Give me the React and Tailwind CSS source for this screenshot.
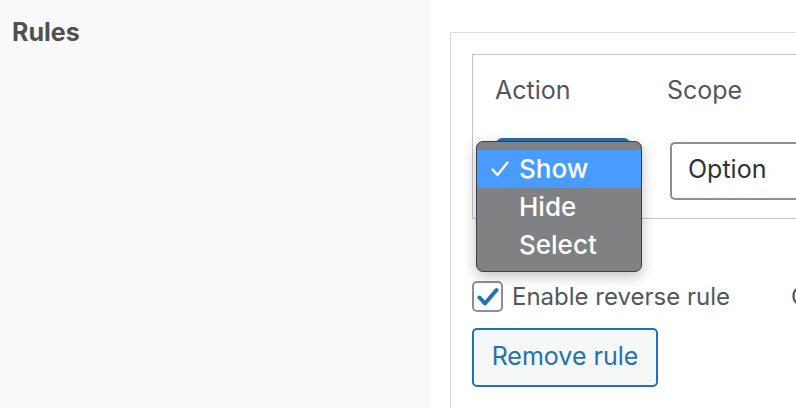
import React from 'react';

const font = { fontFamily: 'Inter, "Liberation Sans", sans-serif' };

const ActionMenu = () => {
    const items = ['Show', 'Hide', 'Select'];
    return (
        <div className="absolute left-[476px] top-[141px] w-[166px] rounded-[7px] border border-[#3f4042] bg-[#7f8183] pt-[8px] pb-[7px] shadow-[0_4px_14px_rgba(0,0,0,0.25)]">
            {items.map((item, i) => (
                <div
                    key={item}
                    className={`flex h-[38px] items-center text-[26px] leading-none text-white ${i === 0 ? 'bg-[#4a9bff]' : ''}`}
                >
                    <span className="flex w-[42px] justify-center pl-[3px]">
                        {i === 0 && (
                            <svg width="18" height="16" viewBox="0 0 18 16" fill="none">
                                <path d="M1.5 8.5 L6.5 14 L16.5 1.5" stroke="white" strokeWidth="2.2" strokeLinecap="round" strokeLinejoin="round" />
                            </svg>
                        )}
                    </span>
                    <span className="font-medium">{item}</span>
                </div>
            ))}
        </div>
    );
};

export default function App() {
    return (
        <div className="relative flex h-[408px] w-[796px] overflow-hidden bg-white" style={font}>
            {/* Sidebar heading */}
            <div className="w-[430px] shrink-0 bg-[#f9f9f9] pl-[12px] pt-[16px]">
                <h2 className="text-[25px] font-bold leading-[32px] text-[#505050]">Rules</h2>
            </div>

            {/* Rules card */}
            <div className="min-w-0 flex-1 pl-[20px] pt-[32px]">
                <div className="h-full border-l border-t border-[#dcdcde] pl-[21px] pt-[21px]">
                    <div className="h-[165px] w-[400px] border-b border-l border-t border-[#c3c4c7] pl-[22px] pt-[18px]">
                        <div className="flex text-[25px] leading-[34px] text-[#50575e]">
                            <div className="w-[172px]">Action</div>
                            <div>Scope</div>
                        </div>
                        <div className="mt-[31px] flex items-start">
                            <div className="ml-[1px] h-[62px] w-[134px] rounded-[6px] bg-[#2271b1]"></div>
                            <div className="ml-[40px] mt-[4px] flex h-[58px] w-[200px] items-center rounded-[5px] border-2 border-r-0 border-[#8c8f94] pb-[2px] pl-[16px] text-[25px] text-[#2c3338]">
                                Option
                            </div>
                        </div>
                    </div>

                    <div className="mt-[62px] flex items-center whitespace-nowrap">
                        <div className="flex h-[31px] w-[31px] shrink-0 items-center justify-center rounded-[5px] border-2 border-[#8c8f94] bg-white">
                            <svg width="22" height="20" viewBox="0 0 22 20" fill="none">
                                <path d="M2.5 10.5 L8 16.5 L19.5 3" stroke="#2271b1" strokeWidth="4" strokeLinecap="round" strokeLinejoin="round" />
                            </svg>
                        </div>
                        <span className="ml-[9px] shrink-0 text-[24px] leading-none text-[#50575e]">Enable reverse rule</span>
                        <span className="ml-[61px] shrink-0 text-[24px] leading-none text-[#50575e]">Condition</span>
                    </div>

                    <button className="mt-[16px] flex h-[59px] w-[186px] items-center justify-center rounded-[5px] border-2 border-[#2271b1] bg-[#f6f7f7] pb-[2px] text-[25px] text-[#2271b1]">
                        Remove rule
                    </button>
                </div>
            </div>

            <ActionMenu />
        </div>
    );
}
